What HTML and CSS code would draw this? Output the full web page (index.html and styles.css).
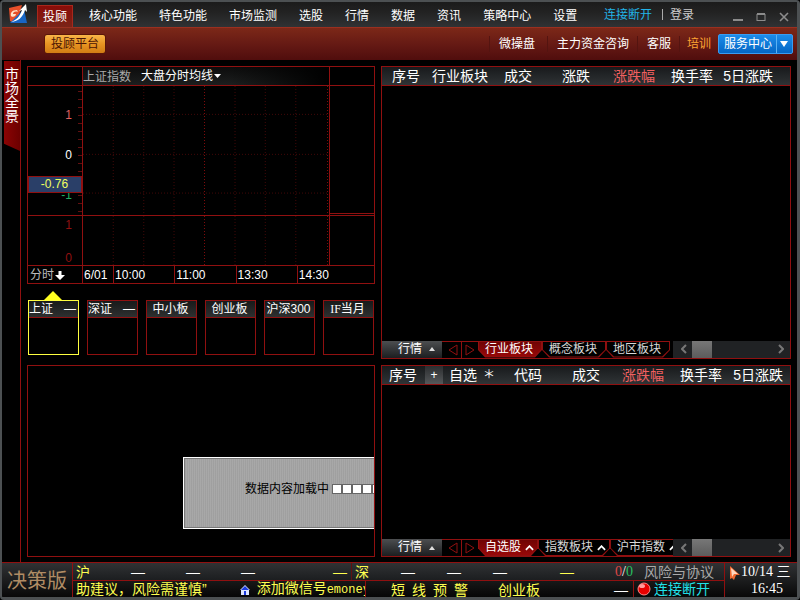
FILE: index.html
```html
<!DOCTYPE html>
<html lang="zh-CN">
<head>
  <meta charset="UTF-8">
  <title>决策版</title>
  <link rel="stylesheet" href="styles.css">
</head>
<body>
<div class="app">

  <!-- title bar -->
  <header class="titlebar">
    <svg class="logo" viewBox="0 0 20 20">
      <path d="M1 4 L14 1 L9 18 L2 17 Z" fill="#e8502a"/>
      <path d="M2 19 L16 5 L19 19 Z" fill="#1765c4"/>
      <path d="M2 18 C8 17 12 12 14 6 L11 7 L18 0 L19 8 L17 6 C15 13 10 18 2 18 Z" fill="#fff"/>
      <path d="M9 6 C4 6 2 9 3 12 C5 14 8 12 8 10 L5 10 C5 8 7 7 10 8 Z" fill="#ffe2c8"/>
    </svg>
    <nav class="menu">
      <a class="menu-item active" href="#">投顾</a>
      <a class="menu-item" href="#">核心功能</a>
      <a class="menu-item" href="#">特色功能</a>
      <a class="menu-item" href="#">市场监测</a>
      <a class="menu-item" href="#">选股</a>
      <a class="menu-item" href="#">行情</a>
      <a class="menu-item" href="#">数据</a>
      <a class="menu-item" href="#">资讯</a>
      <a class="menu-item" href="#">策略中心</a>
      <a class="menu-item" href="#">设置</a>
    </nav>
    <div class="account">
      <a class="offline" href="#">连接断开</a>
      <a class="login" href="#">登录</a>
    </div>
    <div class="win-buttons">
      <button aria-label="最小化"><svg viewBox="0 0 10 10"><path d="M0 8h10" stroke-width="2"/></svg></button>
      <button aria-label="最大化"><svg viewBox="0 0 10 10"><path d="M1 2.5h8M1 8.5h8M1 2v7M9 2v7"/><path d="M1 2h8" stroke-width="2"/></svg></button>
      <button aria-label="关闭"><svg viewBox="0 0 10 10"><path d="M1 1l8 8M9 1l-8 8" stroke-width="1.6"/></svg></button>
    </div>
  </header>

  <!-- ribbon -->
  <div class="ribbon">
    <button class="platform">投顾平台</button>
    <nav class="links">
      <a class="first" href="#">微操盘</a>
      <a href="#">主力资金咨询</a>
      <a href="#">客服</a>
      <a class="train" href="#">培训</a>
    </nav>
    <button class="service">
      <span class="service-text">服务中心</span>
      <span class="service-arrow"><svg viewBox="0 0 8 6"><path d="M0 0h8L4 6z" fill="#fff"/></svg></span>
    </button>
  </div>

  <main class="main">
    <aside class="side">
      <button class="side-tab">市场全景</button>
    </aside>

    <!-- left column -->
    <section class="left">
      <div class="chart">
        <div class="cell head"></div>
        <div class="cell head head-title">
          <span class="index-name">上证指数</span>
          <button class="chart-type">大盘分时均线<svg viewBox="0 0 7 4"><path d="M0 0h7L3.5 4z" fill="#fff"/></svg></button>
        </div>
        <div class="cell head"></div>

        <div class="cell y-axis">
          <span class="up">1</span>
          <span>0</span>
          <span class="down">-1</span>
          <span class="badge">-0.76</span>
        </div>
        <div class="cell plot">
          <svg class="grid">
            <line x1="12.3%" x2="12.3%" y2="100%"/>
            <line x1="24.7%" x2="24.7%" y2="100%"/>
            <line x1="37%" x2="37%" y2="100%"/>
            <line class="mid" x1="49.4%" x2="49.4%" y2="100%"/>
            <line x1="61.8%" x2="61.8%" y2="100%"/>
            <line x1="74.1%" x2="74.1%" y2="100%"/>
            <line x1="86.5%" x2="86.5%" y2="100%"/>
            <line class="mid" x1="99.4%" x2="99.4%" y2="100%"/>
            <line x2="100%" y1="22%" y2="22%"/>
            <line x2="100%" y1="53%" y2="53%"/>
            <line x2="100%" y1="83%" y2="83%"/>
          </svg>
        </div>
        <div class="cell quote"></div>

        <div class="cell volume-axis"><span>1</span><span>0</span></div>
        <div class="cell volume">
          <svg class="grid">
            <line x1="12.3%" x2="12.3%" y2="100%"/>
            <line x1="24.7%" x2="24.7%" y2="100%"/>
            <line x1="37%" x2="37%" y2="100%"/>
            <line class="mid" x1="49.4%" x2="49.4%" y2="100%"/>
            <line x1="61.8%" x2="61.8%" y2="100%"/>
            <line x1="74.1%" x2="74.1%" y2="100%"/>
            <line x1="86.5%" x2="86.5%" y2="100%"/>
            <line class="mid" x1="99.4%" x2="99.4%" y2="100%"/>
          </svg>
        </div>
        <div class="cell"></div>

        <button class="period">分时<svg viewBox="0 0 10 10"><path d="M3.5 1h3v4H10L5 10 0 5h3.5z" fill="#fff"/></svg></button>
        <div class="times">
          <span>6/01</span><span>10:00</span><span>11:00</span><span>13:30</span><span>14:30</span>
        </div>
      </div>

      <div class="cards">
        <div class="card selected"><div class="card-head"><span>上证</span><span>—</span></div></div>
        <div class="card"><div class="card-head"><span>深证</span><span>—</span></div></div>
        <div class="card"><div class="card-head center">中小板</div></div>
        <div class="card"><div class="card-head center">创业板</div></div>
        <div class="card"><div class="card-head center">沪深300</div></div>
        <div class="card"><div class="card-head center"><span><span class="serif">IF</span>当月</span></div></div>
      </div>

      <div class="news">
        <div class="loading">
          <span>数据内容加载中</span>
          <span class="dots"><i></i><i></i><i></i><i></i><i></i><i></i></span>
        </div>
      </div>
    </section>

    <!-- right column -->
    <section class="right">
      <div class="panel">
        <table class="quotes">
          <colgroup><col class="w38"><col class="w68"><col class="w44"><col class="w58"><col class="w65"><col class="w58"><col class="w60"><col></colgroup>
          <thead>
            <tr><th>序号</th><th>行业板块</th><th>成交</th><th>涨跌</th><th class="sorted">涨跌幅</th><th>换手率</th><th>5日涨跌</th><td></td></tr>
          </thead>
        </table>
        <div class="tabbar">
          <button class="market">行情<svg viewBox="0 0 6 4"><path d="M3 0l3 4H0z" fill="#ddd"/></svg></button>
          <div class="pager">
            <button aria-label="上一页"><svg viewBox="0 0 10 12"><path d="M9 1v10L1 6z"/></svg></button>
            <button aria-label="下一页"><svg viewBox="0 0 10 12"><path d="M1 1v10l8-5z"/></svg></button>
          </div>
          <div class="tabs">
            <button class="tab on">行业板块</button>
            <button class="tab">概念板块</button>
            <button class="tab">地区板块</button>
          </div>
          <div class="scroll">
            <svg viewBox="0 0 6 10"><path d="M5 1L1 5l4 4"/></svg>
            <span class="thumb"></span>
            <svg class="next" viewBox="0 0 6 10"><path d="M1 1l4 4-4 4"/></svg>
          </div>
        </div>
      </div>

      <div class="panel">
        <table class="quotes">
          <colgroup><col class="w35"><col class="w26"><col class="w34"><col class="w18"><col class="w47"><col class="w58"><col class="w64"><col class="w58"><col class="w61"><col></colgroup>
          <thead>
            <tr><th>序号</th><th><button class="plus">+</button></th><th>自选</th><th class="star">＊</th><th>代码</th><th>成交</th><th class="sorted">涨跌幅</th><th>换手率</th><th>5日涨跌</th><td></td></tr>
          </thead>
        </table>
        <div class="tabbar">
          <button class="market">行情<svg viewBox="0 0 6 4"><path d="M3 0l3 4H0z" fill="#ddd"/></svg></button>
          <div class="pager">
            <button aria-label="上一页"><svg viewBox="0 0 10 12"><path d="M9 1v10L1 6z"/></svg></button>
            <button aria-label="下一页"><svg viewBox="0 0 10 12"><path d="M1 1v10l8-5z"/></svg></button>
          </div>
          <div class="tabs">
            <button class="tab drop on">自选股<svg viewBox="0 0 10 6"><path d="M1 5l4-4 4 4"/></svg></button>
            <button class="tab drop">指数板块<svg viewBox="0 0 10 6"><path d="M1 5l4-4 4 4"/></svg></button>
            <button class="tab drop">沪市指数<svg viewBox="0 0 10 6"><path d="M1 5l4-4 4 4"/></svg></button>
          </div>
          <div class="scroll">
            <svg viewBox="0 0 6 10"><path d="M5 1L1 5l4 4"/></svg>
            <span class="thumb"></span>
            <svg class="next" viewBox="0 0 6 10"><path d="M1 1l4 4-4 4"/></svg>
          </div>
        </div>
      </div>
    </section>
  </main>

  <!-- status bar -->
  <footer class="status">
    <div class="edition">决策版</div>
    <div class="lines">
      <div class="line">
        <div class="sh"><b>沪</b><span>—</span><span>—</span><span>—</span><b>—</b></div>
        <div class="sz"><b>深</b><span>—</span><span>—</span><span>—</span><b>—</b></div>
        <div class="count"><span class="rise">0</span>/<span class="fall">0</span></div>
        <a class="risk" href="#">风险与协议</a>
      </div>
      <div class="line">
        <div class="ticker">
          <span>助建议，风险需谨慎”</span>
          <svg viewBox="0 0 10 10"><path d="M5 0l5 5H9v5H1V5H0z" fill="#dde6ff"/><path d="M5 1L1 5h8zM4 6h2v4H4z" fill="#1c3be0"/></svg>
          <span>添加微信号<span class="mono">emoney</span></span>
        </div>
        <div class="alert"><span>短</span><span>线</span><span>预</span><span>警</span></div>
        <div class="board"><span>创业板</span><span class="none">—</span></div>
        <div class="conn"><svg viewBox="0 0 14 14"><circle cx="7" cy="7" r="6" fill="#e80000" stroke="#f88" /><ellipse cx="5" cy="4" rx="3" ry="2" fill="#ff9d9d"/></svg>连接断开</div>
      </div>
    </div>
    <div class="clock">
      <div><svg viewBox="0 0 12 14"><path d="M1 0l10 9-4 0-2 5-2-2-2 1z" fill="#f06a30"/><path d="M2 2l7 6-4 0-2 3z" fill="#ffd8c0"/></svg>10/14 三</div>
      <div class="time">16:45</div>
    </div>
  </footer>
</div>
</body>
</html>
```

FILE: styles.css
```css
* {
  box-sizing: border-box;
}

body {
  margin: 0;
  background: #000;
  color: #fff;
  font-family: "Liberation Sans", "Noto Sans CJK SC", sans-serif;
  font-size: 12px;
  line-height: 16px;
  white-space: nowrap;
}

a {
  color: inherit;
  text-decoration: none;
}

button {
  margin: 0;
  padding: 0;
  border: 0;
  background: none;
  color: inherit;
  font: inherit;
  cursor: pointer;
}

svg {
  flex: none;
}

.app {
  display: flex;
  flex-direction: column;
  height: 100vh;
  min-height: 480px;
  overflow: hidden;
  border: 2px solid #4c5052;
  border-right-width: 3px;
  border-bottom-width: 3px;
  border-radius: 4px;
}

/* ===== Title bar ===== */
.titlebar {
  display: flex;
  flex: none;
  align-items: flex-start;
  height: 25px;
  padding: 0 8px 0 6px;
  background: linear-gradient(#1b1b1b, #222 40%, #303234);
}

.logo {
  width: 20px;
  height: 20px;
  margin: 2px 9px 0 0;
}

.menu {
  display: flex;
  height: 25px;
}

.menu-item {
  padding: 6px 11px 0;
}

.menu-item.active {
  margin: 3px 5px 0 0;
  padding: 3px 5px 0;
  border: 1px solid #a8281c;
  border-bottom: 0;
  background: linear-gradient(#8a0c08, #7a2418);
}

.account {
  display: flex;
  margin-left: auto;
  padding-top: 5px;
}

.offline {
  color: #22b4e8;
}

.login {
  margin-left: 10px;
  padding-left: 8px;
  color: #ccc;
  background: linear-gradient(#aaa, #aaa) 0 2px / 1px 11px no-repeat;
}

.win-buttons {
  display: flex;
  gap: 13px;
  margin-left: 39px;
  padding-top: 10px;
}

.win-buttons button,
.win-buttons svg {
  display: block;
  width: 10px;
  height: 10px;
}

.win-buttons svg {
  fill: none;
  stroke: #8c8c8c;
}

/* ===== Ribbon ===== */
.ribbon {
  display: flex;
  flex: none;
  align-items: center;
  height: 33px;
  padding: 0 4px 0 42px;
  border-top: 1px solid #9a3020;
  background: linear-gradient(#7c2818, #661a14 50%, #500d0d);
}

.platform {
  height: 20px;
  padding: 0 6px;
  border: 1px solid #5a1608;
  border-radius: 3px;
  background: linear-gradient(#f9b548, #e89422 50%, #d17c14);
  color: #4a1404;
}

.links {
  display: flex;
  margin-left: auto;
}

.links a {
  padding: 0 8px 0 9px;
  border-left: 1px solid #541410;
}

.links .first {
  padding-right: 12px;
}

.links .train {
  padding: 0 7px;
  color: #ffa632;
}

.service {
  display: flex;
  height: 20px;
  border: 1px solid #3a9cf0;
  border-radius: 2px;
  background: linear-gradient(#1c8cea, #0466c4);
  line-height: 18px;
}

.service-text {
  padding: 0 4px 0 5px;
}

.service-arrow {
  display: flex;
  align-items: center;
  padding: 0 4px 0 3px;
  border-left: 1px solid #5cb2f4;
}

.service-arrow svg {
  width: 8px;
  height: 6px;
}

/* ===== Main area ===== */
.main {
  display: flex;
  flex: 1;
  min-height: 0;
}

.side {
  flex: none;
  width: 19px;
  padding: 1px 0 0 2px;
  border-right: 1px solid #901010;
}

.side-tab {
  display: flex;
  align-items: flex-start;
  width: 16px;
  height: 90px;
  padding: 6px 1px 0;
  background: linear-gradient(90deg, #8c0404, #6c0000);
  clip-path: polygon(0 0, 100% 0, 100% 100%, 0 92%);
  font-size: 14px;
  line-height: 14px;
  text-align: left;
  white-space: normal;
}

.left {
  display: flex;
  flex: 348;
  flex-direction: column;
  min-width: 0;
  padding: 6px 0 5px;
  margin-left: 6px;
}

.right {
  display: flex;
  flex: 410;
  flex-direction: column;
  gap: 6px;
  min-width: 0;
  margin: 0 6px 0 6px;
  padding: 6px 0 5px;
}

/* ===== Chart ===== */
.chart {
  display: grid;
  flex: none;
  grid-template-columns: 55px 1fr 45px;
  grid-template-rows: 19px 130px 50px 17px;
  border: 1px solid #901010;
  border-right: 0;
}

.cell {
  position: relative;
  border-right: 1px solid #901010;
  border-bottom: 1px solid #901010;
}

.head-title {
  display: flex;
  gap: 10px;
  background: linear-gradient(90deg, transparent 60%, #000), linear-gradient(#0c0c0c, #1c1e1e);
  line-height: 20px;
}

.index-name {
  color: #aaa;
}

.chart-type {
  display: flex;
  align-items: center;
}

.chart-type svg {
  width: 7px;
  height: 4px;
  margin-left: 1px;
}

.y-axis {
  display: flex;
  flex-direction: column;
  padding: 9px 10px 0 0;
  background: repeating-linear-gradient(#601010 0 1px, transparent 1px 8px) right 5px / 4px 124px no-repeat;
  line-height: 40px;
  text-align: right;
}

.up {
  color: #e06060;
}

.down {
  color: #20b060;
}

.badge {
  position: absolute;
  top: 90px;
  left: 0;
  width: 100%;
  padding-right: 1px;
  border: 1px solid #901010;
  background: #2a3f68;
  color: #f0ff60;
  line-height: 15px;
  text-align: center;
}

.quote {
  border-bottom: 3px double #901010;
}

.grid {
  display: block;
  width: 100%;
  height: 100%;
  stroke: #400808;
  stroke-dasharray: 1 2;
}

.grid .mid {
  stroke: #800c0c;
}

.volume-axis {
  display: flex;
  flex-direction: column;
  justify-content: space-between;
  padding: 2px 10px 0 0;
  color: #901010;
  line-height: 14px;
  text-align: right;
}

.period {
  display: flex;
  align-items: center;
  gap: 1px;
  padding-left: 2px;
  border-right: 1px solid #901010;
  color: #bbb;
}

.period svg {
  width: 10px;
  height: 10px;
}

.times {
  display: grid;
  grid-column: 2 / 4;
  grid-template-columns: 30fr 61fr 61fr 61fr 33fr;
  padding-right: 45px;
  background: linear-gradient(#901010, #901010) right / 1px 100% no-repeat;
}

.times span {
  min-width: 0;
  padding-left: 1px;
  line-height: 18px;
}

.times span + span {
  border-left: 1px solid #901010;
}

/* ===== Index cards ===== */
.cards {
  display: grid;
  flex: none;
  grid-template-columns: repeat(6, 1fr);
  gap: 8px;
  margin: 16px 1px 10px;
}

.card {
  position: relative;
  height: 55px;
  border: 1px solid #901010;
}

.card-head {
  display: flex;
  justify-content: space-between;
  height: 17px;
  padding-right: 2px;
  border-bottom: 1px solid #901010;
  background: linear-gradient(#181a1a, #2e3030);
  line-height: 17px;
}

.card-head.center {
  justify-content: center;
}

.card.selected {
  border-color: #ffff40;
}

.card.selected::before {
  content: "";
  position: absolute;
  top: -10px;
  left: 15px;
  border: 9px solid transparent;
  border-top: 0;
  border-bottom-color: #ffff20;
}

.serif {
  font-family: "Liberation Serif", serif;
}

/* ===== Loading box ===== */
.news {
  flex: 1;
  overflow: hidden;
  padding: 91px 0 0 155px;
  border: 1px solid #901010;
}

.loading {
  display: flex;
  align-items: center;
  gap: 3px;
  width: 300px;
  height: 72px;
  padding: 0 0 8px 60px;
  border: 2px solid #fff;
  border-width: 1px 2px;
  outline: 1px solid #777;
  outline-offset: -2px;
  background: repeating-linear-gradient(90deg, rgba(0, 0, 0, 0.05) 0 1px, transparent 1px 2px), #a8a8a8;
  color: #000;
}

.dots {
  display: flex;
}

.dots i {
  width: 10px;
  height: 10px;
  border: 1px solid #666;
  background: #fff;
}

/* ===== Quote panels ===== */
.panel {
  display: flex;
  flex: 192;
  flex-direction: column;
  justify-content: space-between;
  border: 1px solid #901010;
}

.panel:first-child {
  flex: 293;
}

.quotes {
  width: 100%;
  table-layout: fixed;
  border-collapse: collapse;
  border-bottom: 1px solid #901010;
  background: linear-gradient(#181a1c, #303436);
  font-size: 14px;
  line-height: 18px;
}

.quotes th,
.quotes td {
  height: 18px;
  padding: 0;
  font-weight: normal;
  text-align: right;
}

.quotes .sorted {
  color: #f06060;
}

.quotes .star {
  font-size: 12px;
}

.plus {
  width: 18px;
  height: 18px;
  background: linear-gradient(#2c2e30, #55585a);
  font-size: 12px;
  line-height: 18px;
  vertical-align: top;
}

.w18 { width: 18px; }
.w26 { width: 26px; }
.w34 { width: 34px; }
.w35 { width: 35px; }
.w38 { width: 38px; }
.w44 { width: 44px; }
.w47 { width: 47px; }
.w58 { width: 58px; }
.w60 { width: 60px; }
.w61 { width: 61px; }
.w64 { width: 64px; }
.w65 { width: 65px; }
.w68 { width: 68px; }

.tabbar {
  display: flex;
  height: 17px;
  line-height: 17px;
}

.market {
  display: flex;
  flex: none;
  align-items: center;
  justify-content: flex-end;
  gap: 7px;
  width: 60px;
  padding-right: 7px;
  background: linear-gradient(#4c4e50, #1c1e20);
}

.market svg {
  width: 6px;
  height: 4px;
}

.pager {
  display: flex;
  flex: none;
  width: 36px;
  padding-left: 2px;
  border-top: 1px solid #901010;
}

.pager button {
  display: flex;
  align-items: center;
  justify-content: center;
  width: 17px;
}

.pager button + button {
  border-left: 1px solid #901010;
}

.pager svg {
  width: 10px;
  height: 12px;
  fill: none;
  stroke: #901010;
}

.tabs {
  display: flex;
  flex: 1;
  min-width: 0;
  overflow: hidden;
}

.tab {
  position: relative;
  display: flex;
  flex: none;
  align-items: center;
  gap: 4px;
  height: 17px;
  padding: 0 9px 0 7px;
  color: #d8d8d8;
  z-index: 0;
}

.tab.drop {
  padding-right: 4px;
}

.tab::before,
.tab::after {
  content: "";
  position: absolute;
  inset: 0;
  z-index: -2;
  background: #901010;
  clip-path: polygon(0 0, 100% 0, 100% 55%, calc(100% - 7px) 100%, 7px 100%, 0 55%);
}

.tab::after {
  inset: 1px;
  z-index: -1;
  background: #000;
}

.tab.on {
  color: #fff;
}

.tab.on::after {
  background: linear-gradient(#700404, #980808);
}

.tab svg {
  width: 9px;
  height: 6px;
  fill: none;
  stroke: #fff;
  stroke-width: 2;
}

.scroll {
  display: flex;
  flex: none;
  align-items: center;
  width: 117px;
  padding: 0 6px 0 8px;
  background: #202224;
}

.scroll svg {
  width: 6px;
  height: 10px;
  fill: none;
  stroke: #777;
  stroke-width: 2;
}

.scroll .next {
  margin-left: auto;
}

.thumb {
  width: 20px;
  height: 17px;
  margin-left: 5px;
  background: linear-gradient(#777, #5c5c5c);
}

/* ===== Status bar ===== */
.status {
  display: flex;
  flex: none;
  height: 35px;
  border-top: 1px solid #901010;
  background: linear-gradient(#303234, #080808);
}

.edition {
  flex: none;
  width: 70px;
  padding-left: 5px;
  color: #b08c64;
  font-size: 20px;
  line-height: 36px;
}

.lines {
  flex: 1;
  min-width: 0;
  border: solid #901010;
  border-width: 0 1px;
  font-size: 14px;
}

.line {
  display: flex;
  height: 17px;
  background: linear-gradient(#303234, #1c1e20);
  line-height: 18px;
}

.line + .line {
  border-top: 1px solid #901010;
  background: linear-gradient(#181818, #060606);
}

.line b,
.ticker,
.alert,
.board {
  color: #ffff50;
  font-weight: normal;
}

.sh,
.sz {
  display: grid;
  flex: none;
  text-align: right;
}

.sh {
  grid-template-columns: 17px 55px 55px 55px 92px;
  width: 279px;
  border-right: 1px solid #601010;
}

.sz {
  grid-template-columns: 17px 46px 46px 46px 67px;
  width: 226px;
}

.count {
  flex: 1;
  padding-right: 11px;
  font-family: "Liberation Serif", serif;
  text-align: right;
}

.rise {
  color: #e04848;
}

.fall {
  color: #28c060;
}

.risk {
  padding-right: 10px;
  color: #aaa;
}

.ticker {
  display: flex;
  flex: none;
  align-items: center;
  width: 293px;
  overflow: hidden;
  padding-left: 3px;
  border-right: 1px solid #901010;
}

.ticker svg {
  width: 10px;
  height: 10px;
  margin: 2px 7px 0 33px;
}

.mono {
  font-family: "Liberation Mono", monospace;
  font-size: 12px;
}

.alert {
  display: flex;
  flex: none;
  gap: 7px;
  padding-left: 25px;
}

.board {
  display: flex;
  flex: 1;
  justify-content: space-between;
  padding: 0 5px 0 30px;
}

.none {
  color: #fff;
}

.conn {
  display: flex;
  flex: none;
  align-items: center;
  gap: 3px;
  width: 91px;
  padding-left: 3px;
  border-left: 1px solid #901010;
  color: #20e0e8;
}

.conn svg {
  width: 14px;
  height: 14px;
}

.clock {
  flex: none;
  width: 72px;
  font-family: "Liberation Serif", "Noto Sans CJK SC", serif;
  font-size: 14px;
  line-height: 17px;
}

.clock svg {
  width: 12px;
  height: 14px;
  margin: 0 0 0 4px;
  vertical-align: middle;
}

.time {
  padding-left: 26px;
}
```
